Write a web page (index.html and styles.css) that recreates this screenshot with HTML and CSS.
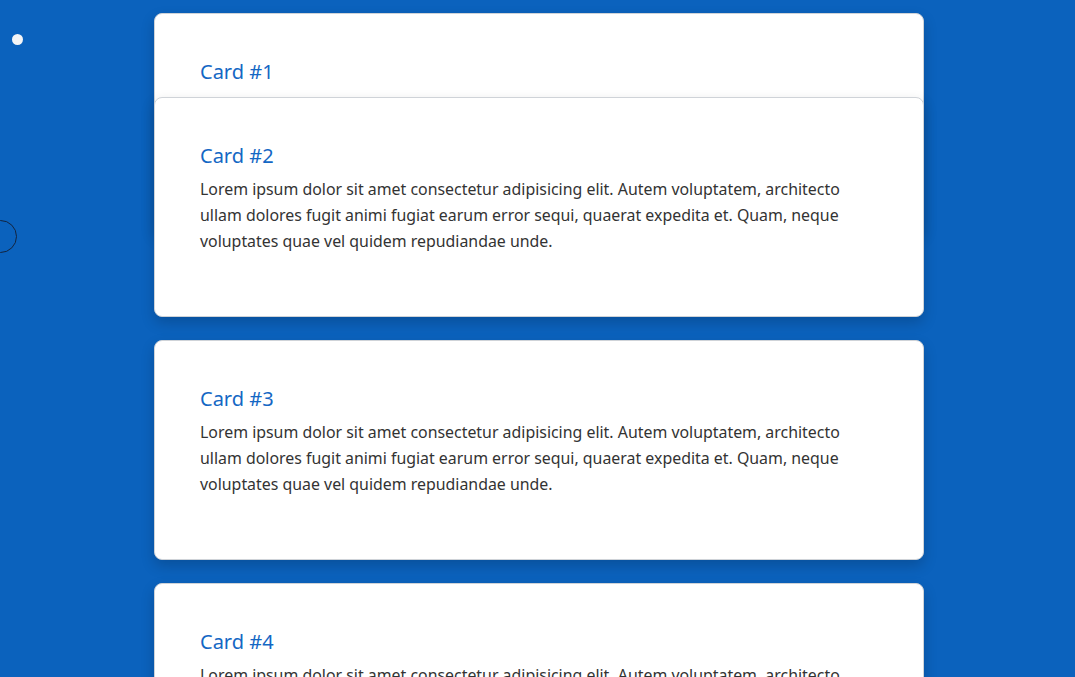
FILE: index.html
```html
<!DOCTYPE html>
<html lang="en">
<head>
<meta charset="utf-8">
<title>Cards</title>
<link rel="stylesheet" href="styles.css">
</head>
<body>
<div class="cursor-dot"></div>
<div class="cursor-ring"></div>
<main class="stack">
  <section class="card">
    <h2 class="card-title">Card #1</h2>
    <p class="card-text">Lorem ipsum dolor sit amet consectetur adipisicing elit. Autem voluptatem, architecto ullam dolores fugit animi fugiat earum error sequi, quaerat expedita et. Quam, neque voluptates quae vel quidem repudiandae unde.</p>
  </section>
  <section class="card card-overlap">
    <h2 class="card-title">Card #2</h2>
    <p class="card-text">Lorem ipsum dolor sit amet consectetur adipisicing elit. Autem voluptatem, architecto ullam dolores fugit animi fugiat earum error sequi, quaerat expedita et. Quam, neque voluptates quae vel quidem repudiandae unde.</p>
  </section>
  <section class="card">
    <h2 class="card-title">Card #3</h2>
    <p class="card-text">Lorem ipsum dolor sit amet consectetur adipisicing elit. Autem voluptatem, architecto ullam dolores fugit animi fugiat earum error sequi, quaerat expedita et. Quam, neque voluptates quae vel quidem repudiandae unde.</p>
  </section>
  <section class="card">
    <h2 class="card-title">Card #4</h2>
    <p class="card-text">Lorem ipsum dolor sit amet consectetur adipisicing elit. Autem voluptatem, architecto ullam dolores fugit animi fugiat earum error sequi, quaerat expedita et. Quam, neque voluptates quae vel quidem repudiandae unde.</p>
  </section>
</main>
</body>
</html>
```

FILE: styles.css
```css
html, body {
  margin: 0;
  padding: 0;
  height: 100%;
  overflow: hidden;
}
body {
  background: #0b62bd;
  font-family: "Noto Sans", "Open Sans", sans-serif;
}
.stack {
  width: 770px;
  margin-left: 154px;
  padding-top: 13px;
  display: flex;
  flex-direction: column;
  gap: 23px;
}
.card {
  position: relative;
  box-sizing: border-box;
  height: 220px;
  background: #fff;
  border: 1px solid #cfd3d8;
  border-radius: 8px;
  padding: 43px 45px 0;
  box-shadow: 0 6px 14px rgba(0, 0, 0, 0.18);
}
.card-overlap {
  margin-top: -159px;
}
.card-title {
  margin: 0 0 5px;
  font-weight: 400;
  font-size: 20px;
  line-height: 30px;
  color: #1467c4;
}
.card-text {
  margin: 0;
  font-size: 15.9px;
  line-height: 26px;
  color: #333;
}
.cursor-dot {
  position: absolute;
  left: 12px;
  top: 34px;
  width: 11px;
  height: 11px;
  border-radius: 50%;
  background: #f4f5f7;
}
.cursor-ring {
  position: absolute;
  left: -16px;
  top: 220px;
  width: 31px;
  height: 31px;
  border: 1.5px solid #13243f;
  border-radius: 50%;
}
```
